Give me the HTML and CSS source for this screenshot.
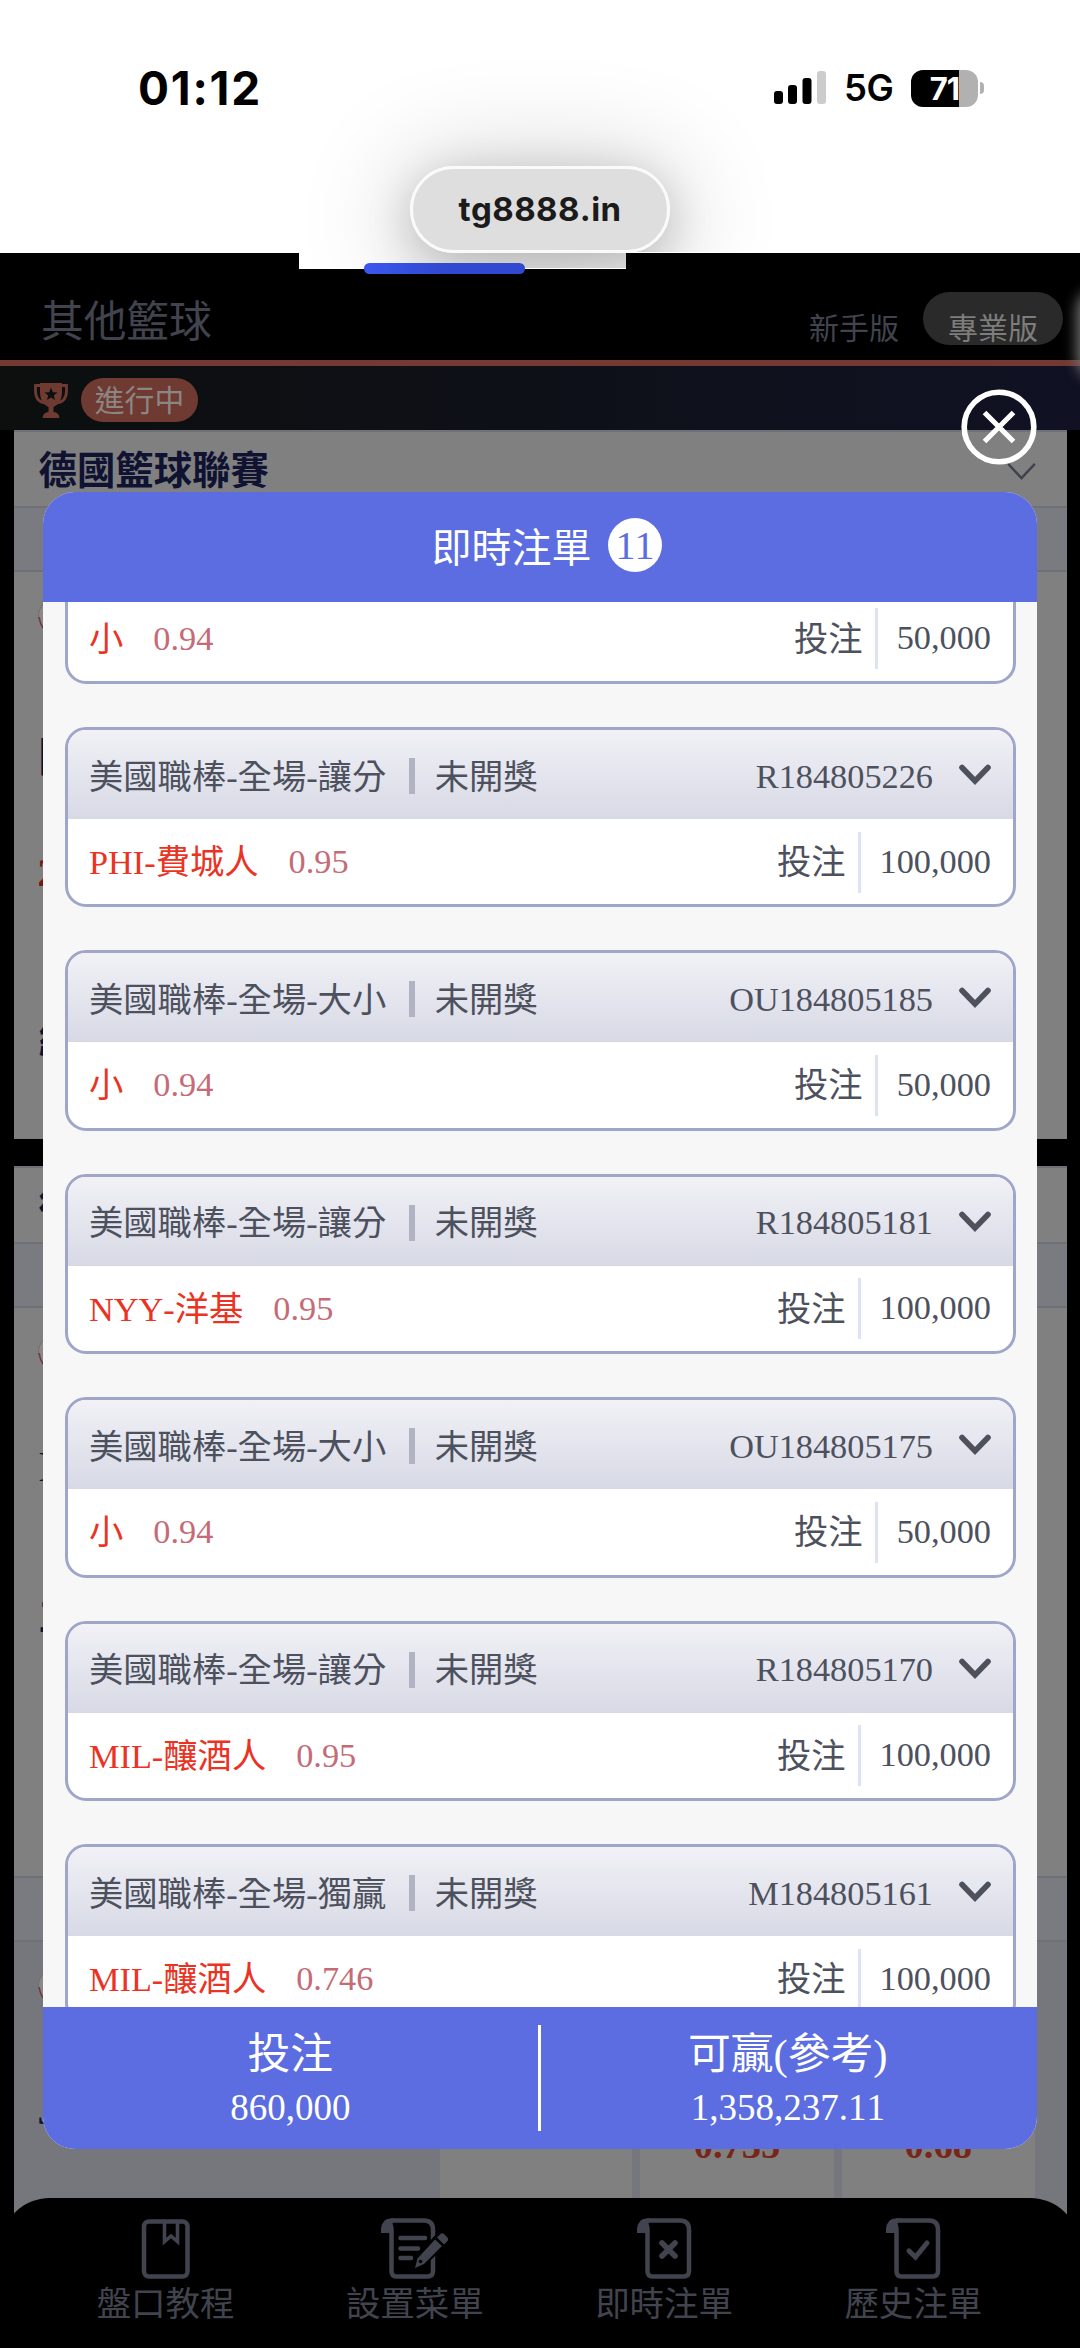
FILE: index.html
```html
<!DOCTYPE html>
<html lang="zh-Hant">
<head>
<meta charset="utf-8">
<title>即時注單</title>
<link rel="stylesheet" href="styles.css">
</head>
<body>
<svg class="defs" aria-hidden="true">
  <symbol id="chevron" viewBox="0 0 32 22"><path d="M3 3.500 16 17 29 3.500" fill="none" stroke="currentColor" stroke-width="5.600" stroke-linecap="round"/></symbol>
  <symbol id="ball" viewBox="0 0 36 36"><circle cx="18" cy="18" r="17.500" fill="#8b8888" stroke="#756c6c"/><path d="M1.200 19Q2 26 6 31" fill="none" stroke="#6f3a3a" stroke-width="1.500"/></symbol>
  <symbol id="sheet" viewBox="0 0 68 62"><path d="M10 2.500H43Q52 2.500 52 12V53Q52 58.500 46.500 58.500H15.500Q10.500 58.500 10.500 53V12Q10.500 3 4 8" fill="none" stroke="currentColor" stroke-width="4.500"/><path d="M0 15V11Q1 1 9 .500H15Q10 3 11 15Z" fill="currentColor"/></symbol>
</svg>
<div class="screen">
  <header class="status">
    <time class="clock">01:12</time>
    <div class="indicators">
      <svg class="signal" viewBox="0 0 52 34"><rect x="0" y="20" width="9" height="13" rx="3"/><rect x="14" y="14" width="9" height="19" rx="3"/><rect x="28.500" y="7" width="9" height="26" rx="3"/><rect x="43" y="0" width="9" height="33" rx="3" fill="#ccc"/></svg>
      <span class="network">5G</span>
      <div class="battery"><span>71</span></div><i class="battery-tip"></i>
    </div>
    <div class="shade"><i></i></div>
    <div class="address">tg8888.in</div>
    <div class="tab-strip"></div>
    <div class="progress"></div>
  </header>

  <div class="topbar">
    <h1>其他籃球</h1>
    <span class="mode">新手版</span>
    <span class="mode mode-on">專業版</span>
    <i class="glow"></i>
  </div>
  <div class="live">
    <svg class="trophy" viewBox="0 0 34 36"><path d="M6 1H28V10C28 18 24 23 19.500 25V30Q25 30.500 25.500 36H8.500Q9 30.500 14.500 30V25C10 23 6 18 6 10Z" fill="#6f3a32"/><path d="M7 3.500H1.500V9Q1.500 20 12 21M27 3.500H32.500V9Q32.500 20 22 21" fill="none" stroke="#6f3a32" stroke-width="2.800"/><path d="M17 5.500 18.800 10.200 23.500 10.400 19.800 13.400 21 18 17 15.500 13 18 14.200 13.400 10.500 10.400 15.200 10.200Z" fill="#0d1010"/></svg>
    <span class="live-tag">進行中</span>
  </div>
  <main class="board">
    <section class="league">
      <div class="league-head"><h2>德國籃球聯賽</h2><svg class="league-arrow" viewBox="0 0 32 20"><path d="M2 2 16 17 30 2" fill="none" stroke="#3f424c" stroke-width="2.500"/></svg></div>
      <div class="league-band"></div>
      <div class="match">
        <svg class="ball"><use href="#ball"/></svg>
        <b class="team team-a">隊</b><b class="odd">2</b><b class="team team-b">維</b>
      </div>
    </section>
    <section class="league">
      <div class="league-head"><h2>德國籃球</h2></div>
      <div class="league-band"></div>
      <div class="match match-2">
        <svg class="ball"><use href="#ball"/></svg>
        <b class="team team-c">E</b><b class="team team-d">主</b>
      </div>
      <div class="league-band band-line"></div>
      <div class="match match-3">
        <svg class="ball"><use href="#ball"/></svg>
        <b class="team team-e">J</b>
        <div class="cells"><span></span><span>0.735</span><span>0.68</span></div>
      </div>
    </section>
  </main>
  <nav class="tabs">
    <a><svg viewBox="0 0 68 62"><rect x="12" y="3.500" width="43.500" height="55" rx="5" fill="none" stroke="currentColor" stroke-width="4.500"/><path d="M32.500 3V23.500L39 18 45.500 23.500V3" fill="none" stroke="currentColor" stroke-width="3.600"/></svg>盤口教程</a>
    <a><svg viewBox="0 0 68 62"><use href="#sheet"/><path d="M19.500 20H44M19.500 30.500H37M19.500 40H30" stroke="currentColor" stroke-width="4.500" stroke-linecap="round"/><path d="M31 52 34 39 59 12 70 22 45 47Z" fill="#000"/><path d="M34 50 36.500 40.500 54 21.500 61 28 43 46ZM56 19.500 59.500 16Q61.500 14.500 63.500 16.500L66.500 19.500Q68 21.500 66 23.500L63 26.500Z" fill="currentColor"/><circle cx="39.500" cy="43.500" r="1.800" fill="#000"/></svg>設置菜單</a>
    <a><svg viewBox="0 0 68 62"><use href="#sheet" x="7"/><path d="M32 25 45 38M45 25 32 38" stroke="currentColor" stroke-width="5.600" stroke-linecap="round"/></svg>即時注單</a>
    <a><svg viewBox="0 0 68 62"><use href="#sheet" x="7"/><path d="M30 33 36.500 39 48 25" fill="none" stroke="currentColor" stroke-width="5" stroke-linecap="round"/></svg>歷史注單</a>
  </nav>

  <button class="close" aria-label="關閉"><svg viewBox="0 0 76 76"><circle cx="38" cy="38" r="34.800" fill="none" stroke="#fff" stroke-width="5.600"/><path d="M23.500 23.500 52.500 52.500M52.500 23.500 23.500 52.500" stroke="#fff" stroke-width="5.200"/></svg></button>

  <div class="modal">
    <div class="modal-head"><span class="title">即時注單</span><span class="count">11</span></div>
    <div class="slips">
      <article class="slip">
        <div class="slip-head"></div>
        <div class="slip-body"><span class="pick">小</span><span class="rate">0.94</span><span class="lab">投注</span><span class="amt">50,000</span></div>
      </article>
      <article class="slip">
        <div class="slip-head"><span class="zh">美國職棒-全場-讓分</span><i></i><span class="zh">未開獎</span><span class="no">R184805226</span><svg><use href="#chevron"/></svg></div>
        <div class="slip-body"><span class="pick">PHI-費城人</span><span class="rate">0.95</span><span class="lab">投注</span><span class="amt">100,000</span></div>
      </article>
      <article class="slip">
        <div class="slip-head"><span class="zh">美國職棒-全場-大小</span><i></i><span class="zh">未開獎</span><span class="no">OU184805185</span><svg><use href="#chevron"/></svg></div>
        <div class="slip-body"><span class="pick">小</span><span class="rate">0.94</span><span class="lab">投注</span><span class="amt">50,000</span></div>
      </article>
      <article class="slip">
        <div class="slip-head"><span class="zh">美國職棒-全場-讓分</span><i></i><span class="zh">未開獎</span><span class="no">R184805181</span><svg><use href="#chevron"/></svg></div>
        <div class="slip-body"><span class="pick">NYY-洋基</span><span class="rate">0.95</span><span class="lab">投注</span><span class="amt">100,000</span></div>
      </article>
      <article class="slip">
        <div class="slip-head"><span class="zh">美國職棒-全場-大小</span><i></i><span class="zh">未開獎</span><span class="no">OU184805175</span><svg><use href="#chevron"/></svg></div>
        <div class="slip-body"><span class="pick">小</span><span class="rate">0.94</span><span class="lab">投注</span><span class="amt">50,000</span></div>
      </article>
      <article class="slip">
        <div class="slip-head"><span class="zh">美國職棒-全場-讓分</span><i></i><span class="zh">未開獎</span><span class="no">R184805170</span><svg><use href="#chevron"/></svg></div>
        <div class="slip-body"><span class="pick">MIL-釀酒人</span><span class="rate">0.95</span><span class="lab">投注</span><span class="amt">100,000</span></div>
      </article>
      <article class="slip">
        <div class="slip-head"><span class="zh">美國職棒-全場-獨贏</span><i></i><span class="zh">未開獎</span><span class="no">M184805161</span><svg><use href="#chevron"/></svg></div>
        <div class="slip-body"><span class="pick">MIL-釀酒人</span><span class="rate">0.746</span><span class="lab">投注</span><span class="amt">100,000</span></div>
      </article>
    </div>
    <div class="totals">
      <div><b>投注</b><span>860,000</span></div>
      <i></i>
      <div><b>可贏(參考)</b><span>1,358,237.11</span></div>
    </div>
  </div>
</div>
</body>
</html>
```
FILE: styles.css
```css
* { box-sizing: border-box; }
html, body { margin: 0; }
body { background: #000; font-family: "Liberation Serif", "Noto Sans CJK TC", serif; font-kerning: none; }
h1, h2 { margin: 0; font-weight: 400; }
b { font-weight: 400; }
.defs { position: absolute; width: 0; height: 0; }
.screen { position: relative; width: 1080px; height: 2348px; overflow: hidden; display: flex; flex-direction: column; background: #000; }

/* status bar and browser address */
.status { position: relative; z-index: 2; height: 252.500px; flex: none; background: #fff; display: flex; justify-content: space-between; padding: 62px 96px 0 138px; font-family: Inter, sans-serif; }
.shade { position: absolute; z-index: 2; inset: 0 0 -16px; clip-path: polygon(0 0, 1080px 0, 1080px 252px, 626px 252px, 626px 268px, 299px 268px, 299px 252px, 0 252px); }
.shade i { position: absolute; left: 410px; top: 166px; width: 260px; height: 87px; border-radius: 44px; box-shadow: 0 10px 110px 10px rgba(0,0,0,.2), 0 12px 48px rgba(0,0,0,.2); }
.clock { font-size: 46px; font-weight: 700; line-height: 52px; height: 52px; letter-spacing: 1.800px; color: #000; }
.indicators { display: flex; align-items: center; height: 52px; }
.signal { width: 52px; height: 34px; margin-right: 18px; }
.network { font-size: 36.500px; font-weight: 600; letter-spacing: -.5px; width: 50px; margin-right: 17px; }
.battery { width: 67px; height: 37px; border-radius: 12px; background: linear-gradient(90deg, #000 71%, #b1b1b1 71%); color: #fff; font-size: 31px; font-weight: 700; line-height: 37px; text-align: center; letter-spacing: -1px; }
.battery-tip { width: 4px; height: 12px; border-radius: 0 4px 4px 0; background: #b1b1b1; margin-left: 2px; }
.address { position: absolute; z-index: 3; left: 410px; top: 166px; width: 260px; height: 87px; border: 3px solid #fafafa; border-radius: 44px; background: #dedede; color: #1b1b1b; font-size: 33px; font-weight: 700; line-height: 81px; text-align: center; letter-spacing: .4px; }
.tab-strip { position: absolute; left: 299px; top: 252px; width: 327px; height: 16.500px; background: #fff; }
.progress { position: absolute; z-index: 4; left: 363.500px; top: 263px; width: 161.500px; height: 11px; border-radius: 5.500px; background: linear-gradient(90deg, #3b57ef, #3149d0 50%); }

/* dimmed page */
.topbar { position: relative; height: 113.500px; flex: none; border-bottom: 6px solid #733932; display: flex; align-items: center; padding: 33px 17px 0 41px; color: #41444e; }
.topbar h1 { font-size: 42.700px; margin-right: auto; line-height: 60px; }
.mode { font-size: 30px; line-height: 52px; margin: 12px 1px 0 0; }
.mode-on { width: 140px; height: 53px; margin: -9px 0 0 23px; padding-top: 12px; line-height: 50px; border-radius: 27px; background: #2a2a2a; color: #7d7d7d; text-align: center; }
.glow { position: absolute; z-index: 1; left: 1083px; top: 42px; width: 30px; height: 78px; border-radius: 15px; background: #777; box-shadow: 0 0 14px 6px #777; }
.live { height: 64px; flex: none; display: flex; align-items: center; gap: 13px; padding: 4px 34px 0; background: linear-gradient(90deg, #0c0f0e, #0e1018 50%, #101224); }
.trophy { width: 34px; height: 36px; }
.live-tag { width: 117px; height: 44px; border-radius: 22px; background: #6f3a32; color: #8b8683; font-size: 29.800px; line-height: 45px; text-align: center; }
.board { flex: 1; margin: 0 13.500px; min-height: 0; }
.league { background: #808080; border-top: 2px solid #707078; }
.league + .league { margin-top: 27px; }
.league-head { height: 74px; padding: 0 30px 0 25px; display: flex; justify-content: space-between; align-items: center; }
.league-head h2 { font-size: 38.400px; line-height: 50px; font-weight: 700; color: #101232; padding-top: 4px; }
.league-arrow { width: 31px; height: 19px; margin-top: 4px; }
.league-band { height: 66px; background: #7a7b80; border: solid #707078; border-width: 2px 0; }
.match { position: relative; height: 567px; }
.match-2 { height: 568px; }
.match-3 { height: 300px; background: #76777d; }
.ball { position: absolute; left: 24px; top: 26px; width: 36px; height: 36px; }
.team, .odd { position: absolute; left: 25px; font-size: 40px; line-height: 40px; font-weight: 700; color: #101232; }
.odd { color: #771712; left: 24px; top: 281px; }
.team-a { top: 166px; } .team-b { top: 448px; } .team-c { top: 139px; font-weight: 400; font-size: 43px; } .team-d { top: 288px; } .team-e { top: 149px; left: 24px; }
.cells { position: absolute; left: 426.500px; top: 190px; right: 32px; display: grid; grid-template-columns: 192px 194px 1fr; gap: 8px; }
.cells span { height: 110px; background: #808080; text-align: center; color: #772618; font-size: 38.500px; font-weight: 700; line-height: 26px; }

.tabs { position: absolute; left: 0; right: 0; bottom: 0; height: 150.500px; padding: 20px 42px 0 41px; border-radius: 50px 50px 0 0; background: #000; display: grid; grid-template-columns: repeat(4, 1fr); color: #41444e; }
.tabs a { display: flex; flex-direction: column; align-items: center; font-size: 34.500px; line-height: 49px; }
.tabs svg { width: 68px; height: 62px; overflow: visible; }
.close { position: absolute; z-index: 5; left: 961px; top: 389px; width: 76px; height: 76px; padding: 0; border: 0; background: none; }
.close svg { display: block; width: 76px; height: 76px; }

/* bet slip dialog */
.modal { position: absolute; z-index: 4; left: 43px; top: 491.500px; width: 994px; height: 1657.500px; border-radius: 32px; overflow: hidden; display: flex; flex-direction: column; background: #f7f7f7; }
.modal-head { height: 110px; flex: none; background: #5b6de0; color: #fff; display: flex; align-items: center; justify-content: center; gap: 16px; font-size: 40px; padding: 0 0 3px 13px; }
.title { padding-bottom: 1px; }
.count { width: 54px; height: 54px; border-radius: 50%; background: #fff; color: #5b6de0; text-align: center; line-height: 56px; letter-spacing: -1px; }
.slips { flex: 1; min-height: 0; overflow: hidden; padding: 0 21.500px; }
.slip { height: 180.400px; margin-bottom: 43px; border: 3px solid #a0a6ca; border-radius: 21px; overflow: hidden; background: #fff; font-size: 34.300px; color: #4d515d; }
.slip:first-child { margin-top: -97.800px; }
.slip-head { height: 89px; display: flex; align-items: center; padding: 3px 21.500px 0 21.500px; background: linear-gradient(#f1f1f6, #d7d9e5); white-space: nowrap; }
.slip-head i { width: 5.500px; height: 36px; margin: 0 20px 0 23px; background: #b0b3c1; }
.slip-head .zh { padding-bottom: 5px; }
.slip-head .no { margin-left: auto; margin-right: 26px; }
.slip-head svg { width: 32px; height: 22px; margin-top: -2px; }
.slip-body { height: 86px; display: flex; align-items: center; padding: 0 21.500px; }
.pick, .lab { padding-bottom: 6px; }
.pick { color: #ea3323; }
.rate { color: #c66b76; margin: 0 auto 0 30px; padding-bottom: 1px; }
.lab { margin-right: 12px; }
.amt { height: 61px; line-height: 59px; border-left: 3px solid #dfe1f4; padding-left: 19px; }
.totals { height: 142.300px; flex: none; background: #5b6de0; color: #fff; display: flex; align-items: center; padding-right: 2px; }
.totals div { flex: 1; display: flex; flex-direction: column; align-items: center; line-height: 50px; padding-top: 7px; }
.totals b { font-size: 42.800px; height: 53px; line-height: 50px; }
.totals span { font-size: 37px; }
.totals i { width: 3px; height: 106px; background: #fff; }
```
